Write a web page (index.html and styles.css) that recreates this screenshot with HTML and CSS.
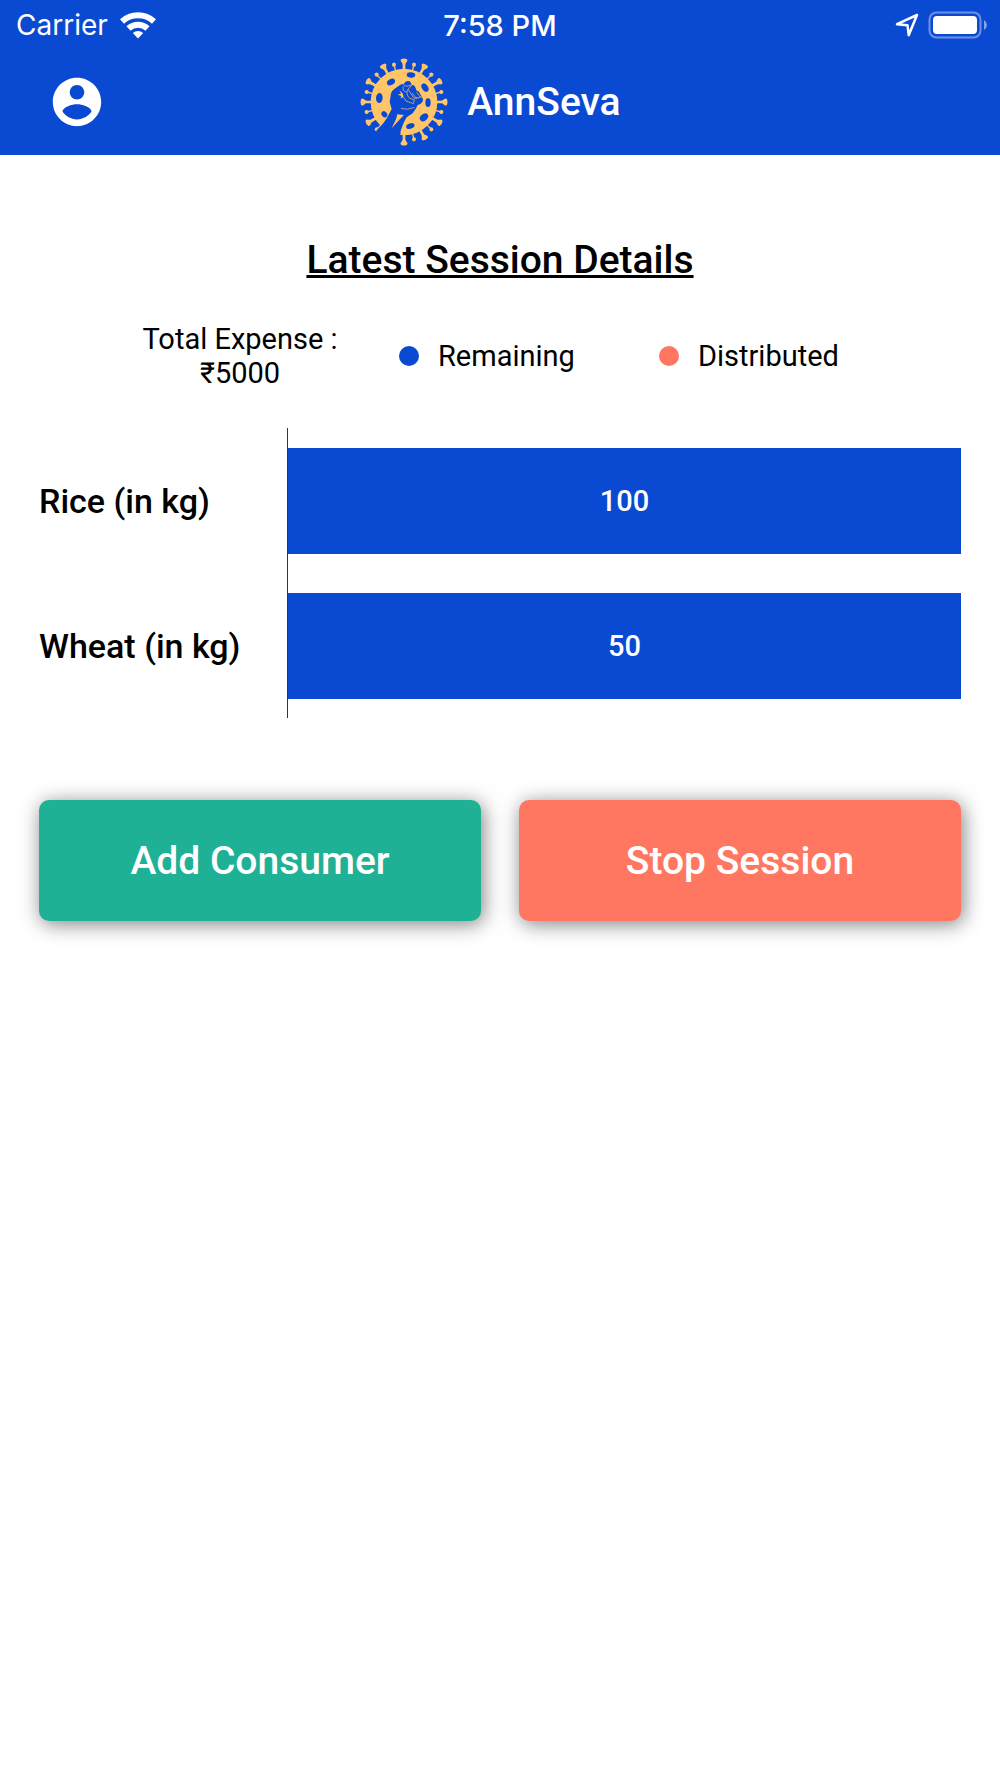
FILE: index.html
```html
<!DOCTYPE html>
<html lang="en">
<head>
<meta charset="UTF-8">
<meta name="viewport" content="width=device-width, initial-scale=1.0">
<title>AnnSeva</title>
<link rel="stylesheet" href="styles.css">
</head>
<body>
<header class="header">
    <div class="status-bar">
        <div class="carrier">
            <span>Carrier</span>
            <svg class="wifi" viewBox="0 0 36 28" fill="none" stroke="#fff" stroke-width="6">
                <path d="M2 10.500a23.500 23.500 0 0 1 32 0"/>
                <path d="M8.500 17.500a14 14 0 0 1 19 0"/>
                <path d="M12.800 22a8 8 0 0 1 10.400 0L18 27.500z" fill="#fff" stroke="none"/>
            </svg>
        </div>
        <div class="time">7:58 PM</div>
        <div class="indicators">
            <svg class="location" viewBox="0 0 24 24" fill="none" stroke="#fff" stroke-width="2.500" stroke-linejoin="round">
                <path d="M22 2L2 11.200l10.500 1 1.200 10z"/>
            </svg>
            <svg class="battery" viewBox="0 0 60 28">
                <rect x="1.500" y="1.500" width="51" height="25" rx="7" fill="none" stroke="#6c91e4" stroke-width="2"/>
                <rect x="5" y="5" width="44" height="18" rx="4" fill="#fff"/>
                <path d="M56 9q3 2 3 5t-3 5z" fill="#84a4e8"/>
            </svg>
        </div>
    </div>
    <div class="app-bar">
        <button class="profile" type="button" aria-label="Profile">
            <svg viewBox="0 0 24 24" fill="#fff">
                <path d="M12 2C6.480 2 2 6.480 2 12s4.480 10 10 10 10-4.480 10-10S17.520 2 12 2zm0 3c1.660 0 3 1.340 3 3s-1.340 3-3 3-3-1.340-3-3 1.340-3 3-3zm0 14.200c-2.500 0-4.710-1.280-6-3.220.03-1.990 4-3.080 6-3.080 1.990 0 5.970 1.090 6 3.080-1.290 1.940-3.500 3.220-6 3.220z"/>
            </svg>
        </button>
        <div class="brand">
            <svg class="logo" viewBox="33 22 264 264">
                <defs>
                    <path id="spike" d="M157 25q8-3 16 0 5 4 0 9-4 4-4 9v18h-8V43q0-5-4-9-5-5 0-9z"/>
                    <g id="knob"><circle cx="165" cy="38" r="6"/><path d="M163 38h4v20h-4z"/></g>
                </defs>
                <g fill="#ffc568">
                    <circle cx="165" cy="154" r="100"/>
                    <use href="#spike"/>
                    <use href="#spike" transform="rotate(30 165 154)"/>
                    <use href="#spike" transform="rotate(60 165 154)"/>
                    <use href="#spike" transform="rotate(90 165 154)"/>
                    <use href="#spike" transform="rotate(120 165 154)"/>
                    <use href="#spike" transform="rotate(150 165 154)"/>
                    <use href="#spike" transform="rotate(180 165 154)"/>
                    <use href="#spike" transform="rotate(240 165 154)"/>
                    <use href="#spike" transform="rotate(270 165 154)"/>
                    <use href="#spike" transform="rotate(300 165 154)"/>
                    <use href="#spike" transform="rotate(330 165 154)"/>
                    <use href="#knob" transform="rotate(15 165 154)"/>
                    <use href="#knob" transform="rotate(45 165 154)"/>
                    <use href="#knob" transform="rotate(75 165 154)"/>
                    <use href="#knob" transform="rotate(105 165 154)"/>
                    <use href="#knob" transform="rotate(135 165 154)"/>
                    <use href="#knob" transform="rotate(165 165 154)"/>
                    <use href="#knob" transform="rotate(225 165 154)"/>
                    <use href="#knob" transform="rotate(255 165 154)"/>
                    <use href="#knob" transform="rotate(285 165 154)"/>
                    <use href="#knob" transform="rotate(315 165 154)"/>
                    <use href="#knob" transform="rotate(345 165 154)"/>
                </g>
                <g fill="#0a4ad3">
                    <ellipse cx="186" cy="73" rx="13" ry="8" transform="rotate(8 186 73)"/>
                    <ellipse cx="126" cy="94" rx="13" ry="9" transform="rotate(-30 126 94)"/>
                    <ellipse cx="91" cy="142" rx="10" ry="15" transform="rotate(5 91 142)"/>
                    <ellipse cx="106" cy="191" rx="8" ry="10" transform="rotate(-40 106 191)"/>
                    <ellipse cx="228" cy="111" rx="9" ry="14" transform="rotate(-32 228 111)"/>
                    <ellipse cx="237" cy="156" rx="8" ry="13"/>
                    <ellipse cx="225" cy="200" rx="14" ry="10" transform="rotate(-40 225 200)"/>
                    <ellipse cx="184" cy="226" rx="13" ry="8" transform="rotate(-20 184 226)"/>
                    <!-- raised fist and forearm -->
                    <path d="M122 154l4-26q2-8 10-13l18-13q5-3 10-2 5-10 14-9 8 1 10 12 8-2 11 7l4 10q8 0 10 9l8 12q3 7-1 13-5 7-14 9-5 13-15 25l-18 12-9 16-9 24-1 16-50 6-23-21q25-23 38-49l9-17z"/>
                </g>
                <g fill="none" stroke="#ffc568" stroke-width="2" stroke-linejoin="round" stroke-linecap="round">
                    <path d="M163 102q6 7 14 4l11-3"/>
                    <path d="M162 108l1 11 9 6 6-10 9-10"/>
                    <path d="M178 117l15 23q5 6 11 1"/>
                    <path d="M190 128l12 15M203 125l12 15"/>
                    <path d="M204 142q7 1 12-5l6 7"/>
                    <path d="M174 126q-2 8 8 17l14 4-2 10"/>
                    <path d="M158 137q10 4 13 14l22 8"/>
                    <path d="M157 174q18 5 38-3"/>
                </g>
                <g fill="#ffc568">
                    <path d="M151 119l5 10-10 3 11 4-2 8 9-7-4-10z"/>
                    <path d="M145 191l20 2-9 9-28 31 13-27z"/>
                </g>
            </svg>
            <h1>AnnSeva</h1>
        </div>
    </div>
</header>

<main class="content">
    <h2>Latest Session Details</h2>

    <div class="summary">
        <p class="expense">Total Expense :<br>₹5000</p>
        <div class="legend"><span class="dot remaining"></span>Remaining</div>
        <div class="legend"><span class="dot distributed"></span>Distributed</div>
    </div>

    <div class="chart">
        <div class="chart-row">
            <div class="chart-label">Rice (in kg)</div>
            <div class="track"><div class="bar remaining" style="width: 100%">100</div></div>
        </div>
        <div class="chart-row">
            <div class="chart-label">Wheat (in kg)</div>
            <div class="track"><div class="bar remaining" style="width: 100%">50</div></div>
        </div>
    </div>

    <div class="actions">
        <button class="add" type="button">Add Consumer</button>
        <button class="stop" type="button">Stop Session</button>
    </div>
</main>
</body>
</html>
```
FILE: styles.css
```css
* {
    box-sizing: border-box;
}
body {
    font-family: Roboto, sans-serif;
    margin: 0;
    background-color: #fff;
    color: #000;
}
h1, h2, p {
    margin: 0;
}
button {
    border: none;
    font-family: inherit;
    cursor: pointer;
}
svg {
    display: block;
}
.header {
    background-color: #0a4ad3;
    color: #fff;
    padding-bottom: 9px;
}
.status-bar {
    display: grid;
    grid-template-columns: 1fr auto 1fr;
    align-items: center;
    height: 50px;
    padding: 0 12px;
    font-family: Inter, sans-serif;
    font-size: 28px;
}
.carrier, .indicators {
    display: flex;
    align-items: center;
}
.carrier {
    gap: 12px;
    padding-left: 4px;
}
.wifi {
    width: 36px;
    height: 28px;
}
.time {
    font-size: 29px;
    font-weight: 500;
}
.indicators {
    justify-content: flex-end;
    gap: 9px;
}
.location {
    width: 24px;
    height: 24px;
}
.battery {
    width: 60px;
    height: 28px;
}
.app-bar {
    display: grid;
    grid-template-columns: 1fr auto 1fr;
    align-items: center;
    height: 96px;
    padding: 8px 48px 0;
}
.profile {
    width: 58px;
    height: 58px;
    padding: 0;
    background: none;
}
.brand {
    display: flex;
    align-items: center;
    gap: 19px;
    padding-right: 19px;
}
.logo {
    width: 88px;
    height: 88px;
}
.brand h1 {
    font-size: 39px;
    font-weight: 500;
}
.content {
    padding: 82px 39px 40px;
}
h2 {
    font-size: 39px;
    font-weight: 500;
    line-height: 46px;
    text-align: center;
    text-decoration: underline;
}
.summary {
    display: grid;
    grid-template-columns: 318fr 260fr 260fr;
    align-items: center;
    padding: 0 42px;
    margin-top: 39px;
    font-size: 29px;
    line-height: 34px;
}
.expense {
    text-align: center;
}
.legend {
    display: flex;
    align-items: center;
    gap: 19px;
}
.dot {
    width: 20px;
    height: 20px;
    border-radius: 50%;
}
.remaining {
    background-color: #0a4ad3;
}
.distributed {
    background-color: #ff7761;
}
.chart {
    margin-top: 38px;
}
.chart-row {
    display: grid;
    grid-template-columns: 248px 1fr;
    align-items: center;
}
.chart-label {
    font-size: 34px;
    font-weight: 500;
}
.track {
    padding: 20px 0 19px;
    border-left: 1px solid #333;
}
.bar {
    display: flex;
    align-items: center;
    justify-content: center;
    height: 106px;
    color: #fff;
    font-size: 29px;
    font-weight: 500;
}
.actions {
    display: grid;
    grid-template-columns: 1fr 1fr;
    gap: 38px;
    margin-top: 82px;
}
.actions button {
    height: 121px;
    border-radius: 10px;
    box-shadow: 2px 3px 20px rgba(0, 0, 0, 0.5);
    color: #fff;
    font-size: 39px;
    font-weight: 500;
}
.actions .add {
    background-color: #1fb195;
}
.actions .stop {
    background-color: #ff7761;
}
```
